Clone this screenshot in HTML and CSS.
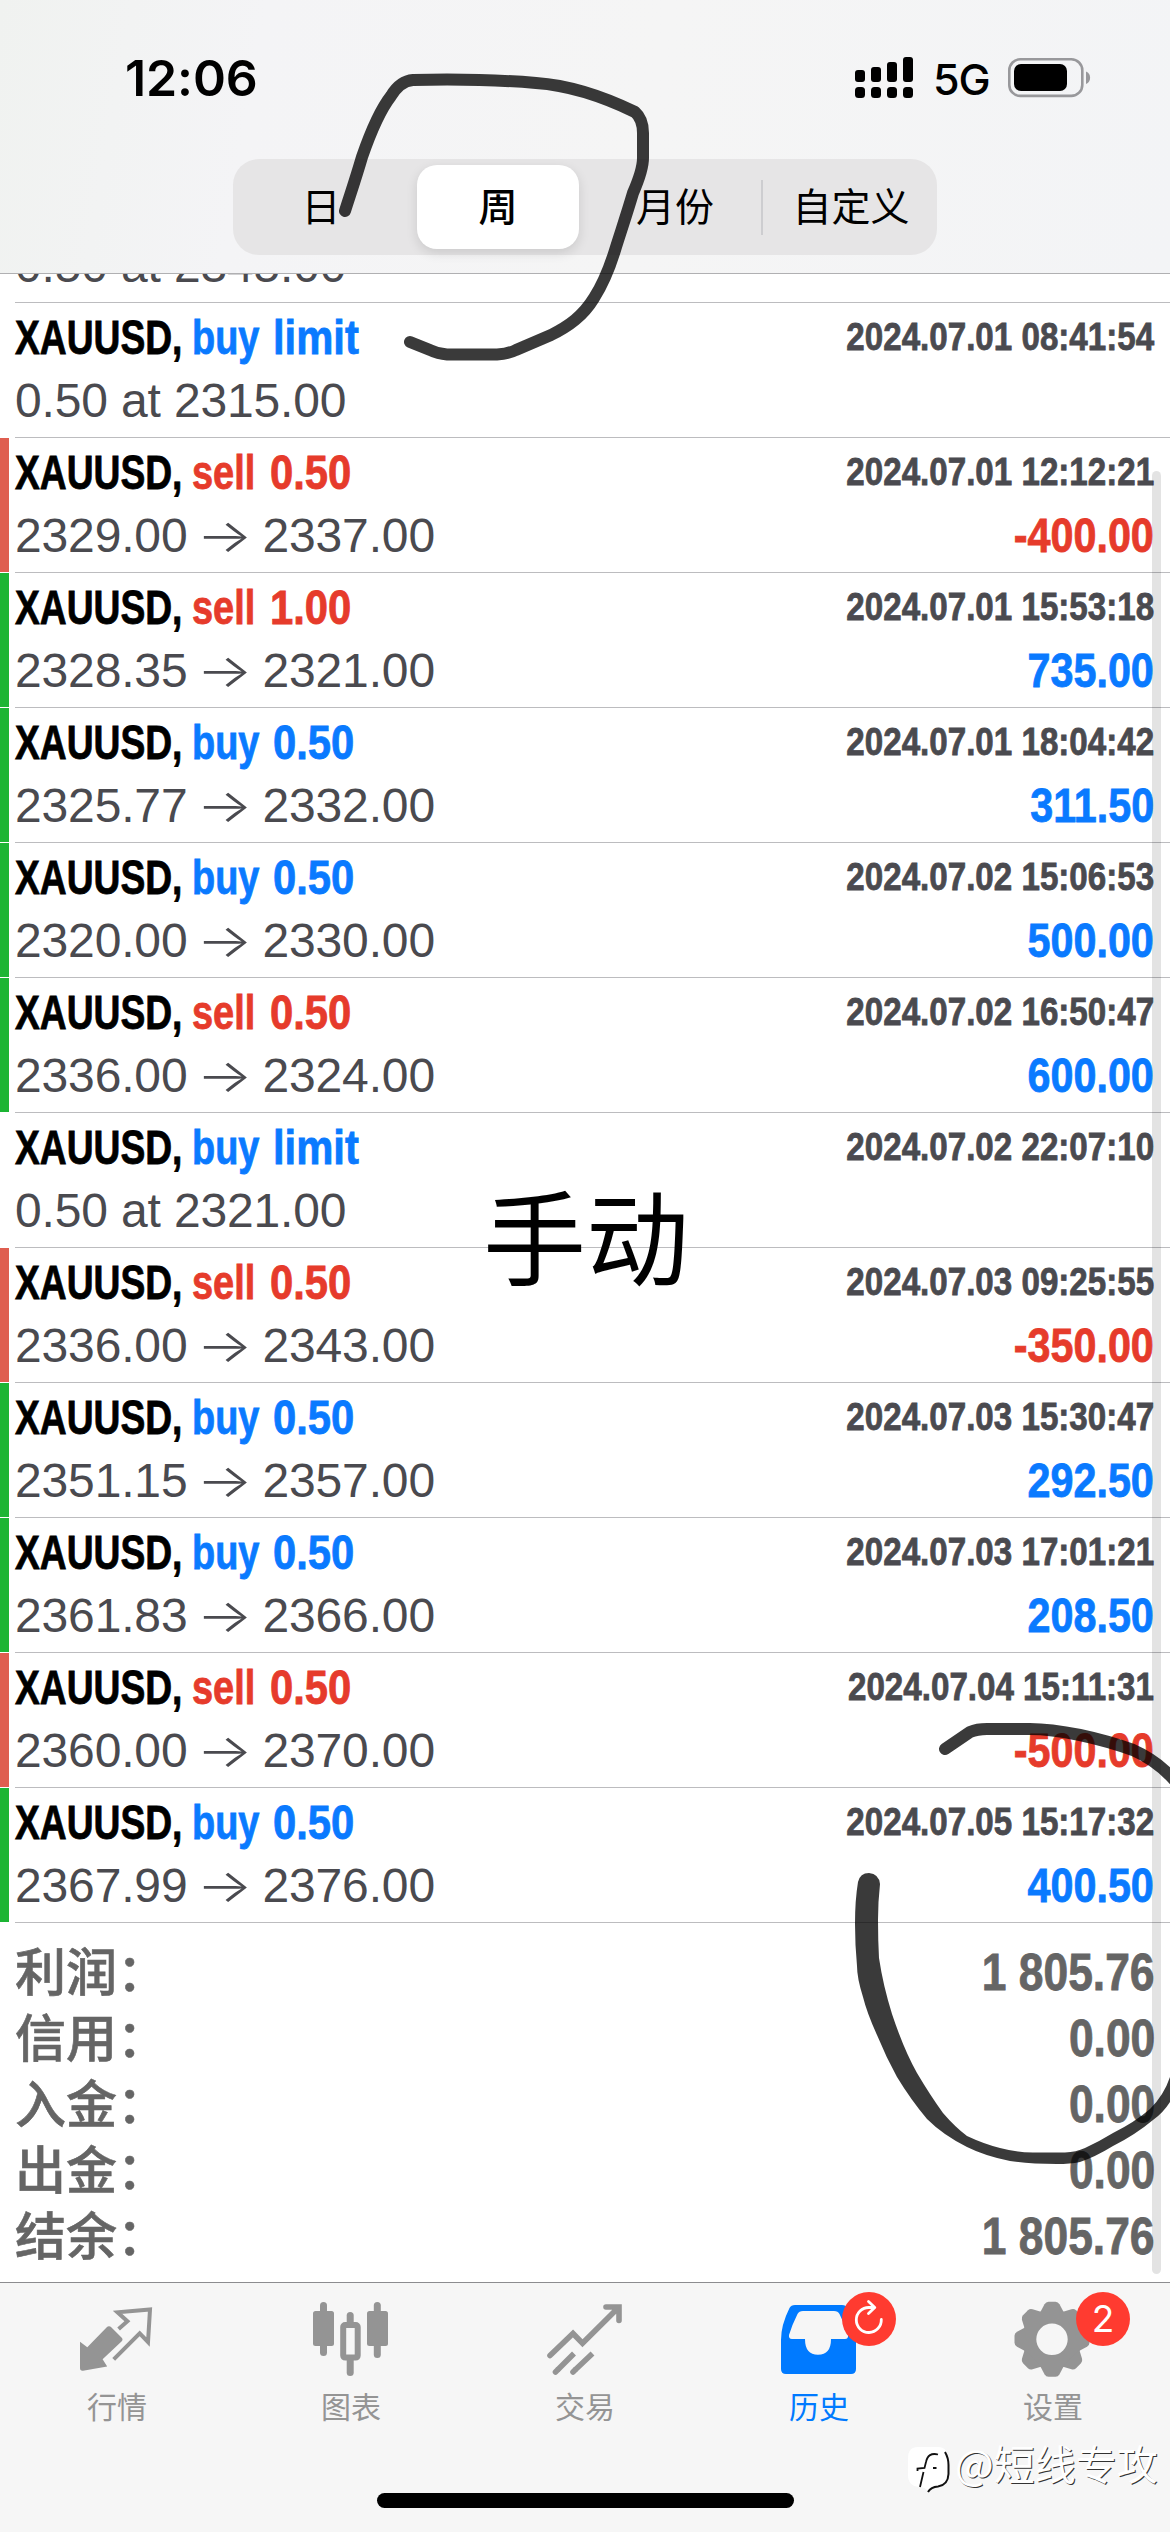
FILE: index.html
```html
<!DOCTYPE html>
<html lang="zh-CN">
<head>
<meta charset="utf-8">
<title>历史</title>
<link rel="stylesheet" href="styles.css">
</head>
<body>
<div class="screen">
  <header class="header">
    <div class="status">
      <span class="clock">12:06</span>
      <div class="status-right">
        <svg class="signal" viewBox="0 0 58 42"><rect x="0" y="13" width="10" height="12" rx="3"/><rect x="16" y="10" width="10" height="15" rx="3"/><rect x="32" y="5" width="10" height="20" rx="3"/><rect x="48" y="0" width="10" height="25" rx="3"/><rect x="0" y="30" width="10" height="11" rx="3.5"/><rect x="16" y="30" width="10" height="11" rx="3.5"/><rect x="32" y="30" width="10" height="11" rx="3.5"/><rect x="48" y="30" width="10" height="11" rx="3.5"/></svg>
        <span class="network">5G</span>
        <svg class="battery" viewBox="0 0 84 40"><rect x="1.3" y="1.3" width="73" height="36.6" rx="11" fill="none" stroke="#98989b" stroke-width="2.6"/><rect x="6" y="6" width="53" height="27" rx="7"/><path d="M78 13.5c5.500 2 5.500 10.500 0 12.500z" fill="#98989b"/></svg>
      </div>
    </div>
    <nav class="segments">
      <span class="segment">日</span>
      <span class="segment selected">周</span>
      <span class="segment month">月份</span>
      <span class="segment last">自定义</span>
    </nav>
  </header>

  <main class="list">
    <div class="deal first"><div class="top"><div class="name"><b class="symbol">XAUUSD,</b><b class="side buy">buy</b><b class="kind buy">limit</b></div></div><div class="bottom"><span>0.50 at 2345.00</span></div></div>
    <div class="deal"><div class="top"><div class="name"><b class="symbol">XAUUSD,</b><b class="side buy">buy</b><b class="kind buy">limit</b></div><time>2024.07.01 08:41:54</time></div><div class="bottom"><span>0.50 at 2315.00</span></div></div>
    <div class="deal loss"><div class="top"><div class="name"><b class="symbol">XAUUSD,</b><b class="side sell">sell</b><b class="kind sell">0.50</b></div><time>2024.07.01 12:12:21</time></div><div class="bottom"><span>2329.00<i>→</i>2337.00</span><b class="profit sell">-400.00</b></div></div>
    <div class="deal gain"><div class="top"><div class="name"><b class="symbol">XAUUSD,</b><b class="side sell">sell</b><b class="kind sell">1.00</b></div><time>2024.07.01 15:53:18</time></div><div class="bottom"><span>2328.35<i>→</i>2321.00</span><b class="profit buy">735.00</b></div></div>
    <div class="deal gain"><div class="top"><div class="name"><b class="symbol">XAUUSD,</b><b class="side buy">buy</b><b class="kind buy">0.50</b></div><time>2024.07.01 18:04:42</time></div><div class="bottom"><span>2325.77<i>→</i>2332.00</span><b class="profit buy">311.50</b></div></div>
    <div class="deal gain"><div class="top"><div class="name"><b class="symbol">XAUUSD,</b><b class="side buy">buy</b><b class="kind buy">0.50</b></div><time>2024.07.02 15:06:53</time></div><div class="bottom"><span>2320.00<i>→</i>2330.00</span><b class="profit buy">500.00</b></div></div>
    <div class="deal gain"><div class="top"><div class="name"><b class="symbol">XAUUSD,</b><b class="side sell">sell</b><b class="kind sell">0.50</b></div><time>2024.07.02 16:50:47</time></div><div class="bottom"><span>2336.00<i>→</i>2324.00</span><b class="profit buy">600.00</b></div></div>
    <div class="deal"><div class="top"><div class="name"><b class="symbol">XAUUSD,</b><b class="side buy">buy</b><b class="kind buy">limit</b></div><time>2024.07.02 22:07:10</time></div><div class="bottom"><span>0.50 at 2321.00</span></div></div>
    <div class="deal loss"><div class="top"><div class="name"><b class="symbol">XAUUSD,</b><b class="side sell">sell</b><b class="kind sell">0.50</b></div><time>2024.07.03 09:25:55</time></div><div class="bottom"><span>2336.00<i>→</i>2343.00</span><b class="profit sell">-350.00</b></div></div>
    <div class="deal gain"><div class="top"><div class="name"><b class="symbol">XAUUSD,</b><b class="side buy">buy</b><b class="kind buy">0.50</b></div><time>2024.07.03 15:30:47</time></div><div class="bottom"><span>2351.15<i>→</i>2357.00</span><b class="profit buy">292.50</b></div></div>
    <div class="deal gain"><div class="top"><div class="name"><b class="symbol">XAUUSD,</b><b class="side buy">buy</b><b class="kind buy">0.50</b></div><time>2024.07.03 17:01:21</time></div><div class="bottom"><span>2361.83<i>→</i>2366.00</span><b class="profit buy">208.50</b></div></div>
    <div class="deal loss"><div class="top"><div class="name"><b class="symbol">XAUUSD,</b><b class="side sell">sell</b><b class="kind sell">0.50</b></div><time>2024.07.04 15:11:31</time></div><div class="bottom"><span>2360.00<i>→</i>2370.00</span><b class="profit sell">-500.00</b></div></div>
    <div class="deal gain"><div class="top"><div class="name"><b class="symbol">XAUUSD,</b><b class="side buy">buy</b><b class="kind buy">0.50</b></div><time>2024.07.05 15:17:32</time></div><div class="bottom"><span>2367.99<i>→</i>2376.00</span><b class="profit buy">400.50</b></div></div>

    <section class="totals">
      <div class="total"><span>利润：</span><b>1 805.76</b></div>
      <div class="total"><span>信用：</span><b>0.00</b></div>
      <div class="total"><span>入金：</span><b>0.00</b></div>
      <div class="total"><span>出金：</span><b>0.00</b></div>
      <div class="total"><span>结余：</span><b>1 805.76</b></div>
    </section>
    <div class="scrollbar"></div>
  </main>

  <nav class="tabs">
    <div class="tab">
      <svg viewBox="0 0 100 90"><path d="M13 46.700L20.300 52.300L39.500 32.500Q42 30 44.500 32.500L54.500 42.500Q56.500 44.500 54.500 46.500L35.600 64.300L40.200 71.500L16 75.700Q13 76 13 73Z" fill="currentColor"/><path d="M51.600 34L60.400 26.300L50.500 17.300L83 14.500L81 47L72.700 38.300L46.700 64.300" fill="none" stroke="currentColor" stroke-width="4"/></svg>
      <span>行情</span>
    </div>
    <div class="tab">
      <svg viewBox="0 0 100 90" fill="currentColor"><rect x="19" y="7" width="7" height="54" rx="3.500"/><rect x="12" y="16" width="21" height="35" rx="2.500"/><rect x="72.800" y="7" width="7" height="56" rx="3.500"/><rect x="66" y="16" width="21" height="35" rx="2.500"/><rect x="45.700" y="17" width="7" height="15" rx="3.500"/><rect x="45.700" y="60" width="7" height="21" rx="3.500"/><rect x="42.200" y="30" width="14.500" height="32.600" rx="2" fill="none" stroke="currentColor" stroke-width="6"/></svg>
      <span>图表</span>
    </div>
    <div class="tab">
      <svg viewBox="0 0 100 90" fill="none" stroke="currentColor" stroke-width="5.600" stroke-linecap="round"><path d="M15 60.500L38 38.500L47.500 48.300L83.500 12.500M71 12H84V25.500"/><path d="M22.500 75L39 58.500M40 75L57.500 58.500" stroke-linecap="butt"/><path d="M20.500 77L22.500 75M38 77L40 75"/></svg>
      <span>交易</span>
    </div>
    <div class="tab active">
      <svg viewBox="0 0 100 90"><path fill-rule="evenodd" fill="currentColor" d="M26 10H73Q77 10 78.500 13Q87 30 87 45V74Q87 79 82 79H17Q12 79 12 74V45Q12 30 20.500 13Q22 10 26 10ZM34 16Q30 16 28.500 19Q23 30 20 40Q19.500 44 23 44H36Q36 59.700 49 59.700Q62 59.700 62 44H76Q79.500 44 79 40Q76 30 70.500 19Q69 16 65 16Z"/></svg>
      <span>历史</span>
      <div class="badge"><svg viewBox="0 0 54 54" fill="none" stroke="#fff" stroke-width="2.800" stroke-linecap="round" stroke-linejoin="round"><path d="M39.300 27.500A12.500 12.500 0 1 1 27 15.500H32.500M26.500 9.500L32.800 15.500L26.500 21.500"/></svg></div>
    </div>
    <div class="tab">
      <svg viewBox="0 0 100 90"><circle cx="49" cy="44.300" r="22.700" fill="none" stroke="currentColor" stroke-width="14"/><g fill="currentColor" transform="translate(49 44.300)"><path id="tooth" d="M-12-26.500L-7.500-35Q-6-37.500-3.500-37.500H3.500Q6-37.500 7.500-35L12-26.500Z"/><use href="#tooth" transform="rotate(45)"/><use href="#tooth" transform="rotate(90)"/><use href="#tooth" transform="rotate(135)"/><use href="#tooth" transform="rotate(180)"/><use href="#tooth" transform="rotate(225)"/><use href="#tooth" transform="rotate(270)"/><use href="#tooth" transform="rotate(315)"/></g></svg>
      <span>设置</span>
      <div class="badge">2</div>
    </div>
  </nav>

  <div class="home-indicator"></div>
  <div class="note">手动</div>
  <svg class="ink" viewBox="0 0 1170 2532">
    <path class="stroke" d="M345 211C350 195 355 181 362 157C371 131 380 110 391 96Q400 81 413 80C455 79 500 80 536 83C565 85 600 95 635 112Q643 119 643 133V158Q643 170 633 193C628 210 623 225 616 247C610 267 603 284 594 298C583 316 569 326 551 335L516 350Q508 354 497 354.500H447Q438 354 430 350L410 342"/>
    <path class="stroke" d="M945 1749L970 1732Q977 1729 987 1729H1030Q1050 1729 1080 1735Q1108 1741 1133 1750Q1158 1761 1176 1782"/>
    <path d="M858 1882Q860 1873 869 1873Q879 1874 880 1884Q878 1902 878 1920Q878 1940 879 1958Q883 1985 892 2014Q904 2050 917 2073Q930 2095 943 2113Q955 2127 967 2136Q984 2144 1000 2148Q1015 2152 1033 2152.500H1065Q1076 2152 1085 2148Q1100 2141 1113 2133Q1135 2122 1150 2109Q1164 2095 1170 2077V2102Q1163 2113 1153 2120Q1135 2135 1113 2146Q1095 2157 1080 2162Q1070 2164 1057 2164Q1030 2164 1010 2161Q985 2156 967 2147Q943 2135 927 2119Q911 2100 897 2077Q886 2057 877 2035Q867 2013 863 1997Q857 1978 857 1966Q855 1945 855 1924Q855 1900 858 1882Z"/>
  </svg>
  <div class="watermark">
    <svg viewBox="0 0 44 56"><path d="M11 6H31Q41 6 41 18V35Q41 45 30 46Q24 47 21 51Q19 46 12 46Q1 45 1 34V17Q1 6 11 6Z" fill="#fff"/><path d="M38 11Q41.500 17 41.500 24V33Q41 44 31 45.500Q24 46 21 51" fill="none" stroke="#111" stroke-width="2"/><path d="M31 13.500Q21 11 19 21L17.500 27L10.500 27.500V30M16.500 31L13 46M26 27H29.500" fill="none" stroke="#111" stroke-width="1.800"/></svg>
    <span>@短线专攻</span>
  </div>
</div>
</body>
</html>
```
FILE: styles.css
```css
* { box-sizing: border-box; }
body { margin: 0; background: #fff; }
.screen {
  position: relative;
  width: 1170px;
  height: 2532px;
  overflow: hidden;
  display: flex;
  flex-direction: column;
  font-family: "Liberation Sans", "Noto Sans CJK SC", sans-serif;
  background: #fff;
}

/* status bar and period switch */
.header {
  height: 274px;
  flex: none;
  border-bottom: 1px solid #b0b0b2;
  background: linear-gradient(100deg, #f0f2f0 0, #f4f4f6 22%, #f5f5f5 55%, #f3f4f6 100%);
}
.status {
  height: 159px;
  padding: 57px 78px 0 125px;
  display: flex;
  justify-content: space-between;
}
.clock {
  font: 600 50px/42px Inter, sans-serif;
  letter-spacing: -0.1px;
}
.status-right { display: flex; height: 42px; }
.signal { width: 58px; height: 42px; }
.network {
  width: 95px;
  padding-left: 20px;
  font: 500 43px/44px Inter, sans-serif;
  letter-spacing: -1px;
}
.battery { width: 84px; height: 40px; margin-top: 1px; }
.segments {
  width: 704px;
  height: 96px;
  margin: 0 0 0 233px;
  padding: 6px 0;
  display: grid;
  grid-template-columns: repeat(4, 1fr);
  border-radius: 26px;
  background: #e6e5e6;
}
.segment {
  text-align: center;
  font: 400 39px/79px "Noto Sans CJK SC", sans-serif;
}
.segment.month { padding-left: 4px; }
.segment.selected {
  margin: 0 6px 0 8px;
  border-radius: 20px;
  background: #fff;
  font-weight: 500;
  box-shadow: 0 4px 12px rgba(0, 0, 0, .12);
}
.segment.last {
  padding-left: 4px;
  background: linear-gradient(#cdcdd0, #cdcdd0) 0 15px / 2px 55px no-repeat;
}

/* deals */
.list {
  position: relative;
  flex: none;
  height: 2008px;
  overflow: hidden;
}
.deal {
  height: 135px;
  padding: 4px 16px 0 15px;
  background: linear-gradient(#bcbcbf, #bcbcbf) 15px 134px / 1155px 1px no-repeat;
}
.deal.first { margin-top: -106px; }
.deal.loss { background: linear-gradient(#df5e50, #df5e50) 0 0 / 9px 134px no-repeat, linear-gradient(#bcbcbf, #bcbcbf) 15px 134px / 1155px 1px no-repeat; }
.deal.gain { background: linear-gradient(#1cb534, #1cb534) 0 0 / 9px 134px no-repeat, linear-gradient(#bcbcbf, #bcbcbf) 15px 134px / 1155px 1px no-repeat; }
.top, .bottom {
  height: 62px;
  display: flex;
  justify-content: space-between;
  white-space: nowrap;
  font-size: 48px;
  line-height: 62px;
  color: #4a4a4f;
}
.bottom { line-height: 64px; }
.bottom span { letter-spacing: -.15px; }
.name { display: flex; }
.name b, .profit, time, .total b {
  display: block;
  -webkit-text-stroke: .8px currentColor;
}
.symbol { width: 177px; color: #000; transform: scaleX(.775); transform-origin: 0 0; }
.side { transform: scaleX(.79); transform-origin: 0 0; }
.side.sell { width: 78px; }
.side.buy { width: 81px; }
.kind { transform: scaleX(.87); transform-origin: 0 0; }
.buy { color: #0a7aff; }
.sell { color: #e63b2b; }
time {
  font-size: 39px;
  font-weight: 700;
  line-height: 60px;
  transform: scaleX(.85);
  transform-origin: 100% 0;
}
.profit { transform: scaleX(.86); transform-origin: 100% 0; }
.bottom i {
  display: inline-block;
  width: 75px;
  text-align: center;
  font: 300 46px/1 Inter, sans-serif;
  transform: scaleX(1.28);
}

/* totals */
.totals { padding: 16px 15px 0; }
.total {
  height: 66px;
  display: flex;
  justify-content: space-between;
  line-height: 68px;
  font-size: 51px;
  color: #656565;
}
.total span {
  font: 500 51px/60px "Noto Sans CJK SC", sans-serif;
  -webkit-text-stroke: .6px currentColor;
}
.total b { transform: scaleX(.87); transform-origin: 100% 0; }
.scrollbar {
  position: absolute;
  left: 1152px;
  top: 197px;
  width: 9px;
  height: 1803px;
  border-radius: 5px;
  background: rgba(0, 0, 0, .11);
}

/* tab bar */
.tabs {
  flex: 1;
  padding-top: 12px;
  border-top: 1px solid #8c8c8f;
  display: grid;
  grid-template-columns: repeat(5, 1fr);
  background: #f6f6f6;
  color: #949494;
}
.tab {
  position: relative;
  display: flex;
  flex-direction: column;
  align-items: center;
}
.tab > svg { width: 100px; height: 90px; }
.tab span { font: 400 30px/40px "Noto Sans CJK SC", sans-serif; }
.tab.active { color: #007aff; }
.badge {
  position: absolute;
  left: 140px;
  top: -3px;
  width: 54px;
  height: 54px;
  border-radius: 50%;
  background: #ff3b30;
  color: #fff;
  font: 400 37px/54px Inter, sans-serif;
  text-align: center;
}
.badge svg { display: block; }
.home-indicator {
  position: absolute;
  left: 377px;
  top: 2493px;
  width: 417px;
  height: 15px;
  border-radius: 8px;
  background: #000;
}

/* annotations */
.note {
  position: absolute;
  left: 483px;
  top: 1159px;
  font: 400 103px/150px "Noto Sans CJK SC", sans-serif;
}
.ink {
  position: absolute;
  left: 0;
  top: 0;
  width: 1170px;
  height: 2532px;
  fill: #000;
  opacity: .77;
}
.stroke {
  fill: none;
  stroke: #000;
  stroke-width: 12;
  stroke-linecap: round;
  stroke-linejoin: round;
}
.watermark {
  position: absolute;
  left: 907px;
  top: 2441px;
  display: flex;
  color: #fff;
}
.watermark svg { width: 44px; height: 56px; }
.watermark span {
  margin-left: 4px;
  font: 400 41px/42px "Noto Sans CJK SC", sans-serif;
  text-shadow: 1px 1px 0 #333;
}
```
